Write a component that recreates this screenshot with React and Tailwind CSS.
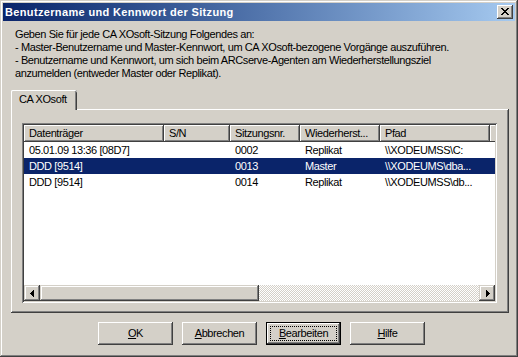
import React from 'react';

const columns = [
  { label: 'Datenträger', w: 'w-[140px]' },
  { label: 'S/N', w: 'w-[66px]' },
  { label: 'Sitzungsnr.', w: 'w-[70px]' },
  { label: 'Wiederherst...', w: 'w-[80px]' },
  { label: 'Pfad', w: 'w-[110px]' },
];

const rows = [
  { cells: ['05.01.09 13:36 [08D7]', '', '0002', 'Replikat', '\\\\XODEUMSS\\C:'] },
  { cells: ['DDD [9514]', '', '0013', 'Master', '\\\\XODEUMS\\dba...'], selected: true },
  { cells: ['DDD [9514]', '', '0014', 'Replikat', '\\\\XODEUMSS\\db...'] },
];

function CloseGlyph() {
  return (
    <svg width="8" height="7" viewBox="0 0 8 7" shapeRendering="crispEdges">
      <path
        fill="#000"
        d="M0 0h2v1H0zM6 0h2v1H6zM1 1h2v1H1zM5 1h2v1H5zM2 2h4v1H2zM3 3h2v1H3zM2 4h4v1H2zM1 5h2v1H1zM5 5h2v1H5zM0 6h2v1H0zM6 6h2v1H6z"
      />
    </svg>
  );
}

function Arrow({ dir }) {
  return (
    <svg width="4" height="7" viewBox="0 0 4 7" shapeRendering="crispEdges">
      {dir === 'left' ? (
        <path fill="#000" d="M3 0h1v7H3zM2 1h1v5H2zM1 2h1v3H1zM0 3h1v1H0z" />
      ) : (
        <path fill="#000" d="M0 0h1v7H0zM1 1h1v5H1zM2 2h1v3H2zM3 3h1v1H3z" />
      )}
    </svg>
  );
}

function PushButton({ children, isDefault }) {
  if (isDefault) {
    return (
      <div className="w-[75px] h-[23px] border border-black">
        <div className="h-full p-[3px] shadow-[inset_-1px_-1px_#404040,inset_1px_1px_#fff,inset_-2px_-2px_#808080]">
          <div className="h-full border border-dotted border-black flex items-center justify-center">
            {children}
          </div>
        </div>
      </div>
    );
  }
  return (
    <div className="w-[75px] h-[23px] flex items-center justify-center shadow-[inset_-1px_-1px_#404040,inset_1px_1px_#fff,inset_-2px_-2px_#808080]">
      {children}
    </div>
  );
}

export default function App() {
  return (
    <div className="w-[518px] h-[357px] p-[3px] bg-[#d4d0c8] text-black text-[11px] tracking-[-0.4px] font-['Liberation_Sans',Arial,sans-serif] shadow-[inset_-1px_-1px_#404040,inset_1px_1px_#d4d0c8,inset_-2px_-2px_#808080,inset_2px_2px_#fff] overflow-hidden">
      {/* title bar */}
      <div className="h-[18px] flex items-center pl-[2px] pr-[2px] bg-gradient-to-r from-[#0a246a] to-[#a6caf0]">
        <span className="text-white font-bold text-[11px] tracking-[0.35px] leading-none">Benutzername und Kennwort der Sitzung</span>
        <div className="ml-auto w-[16px] h-[14px] bg-[#d4d0c8] flex items-center justify-center pr-px pb-px shadow-[inset_-1px_-1px_#404040,inset_1px_1px_#fff,inset_-2px_-2px_#808080]">
          <CloseGlyph />
        </div>
      </div>

      {/* intro text */}
      <div className="mt-[7px] pl-[12px] leading-[13px]">
        <p>Geben Sie für jede CA XOsoft-Sitzung Folgendes an:</p>
        <p>- Master-Benutzername und Master-Kennwort, um CA XOsoft-bezogene Vorgänge auszuführen.</p>
        <p>- Benutzername und Kennwort, um sich beim ARCserve-Agenten am Wiederherstellungsziel</p>
        <p>anzumelden (entweder Master oder Replikat).</p>
      </div>

      {/* tab control */}
      <div className="mt-[10px] ml-[8px] w-[498px]">
        <div className="flex">
          <div className="relative z-10 -mb-px w-[66px] h-[20px] bg-[#d4d0c8] rounded-t-[2px] pl-[8px] pt-[3px] leading-[13px] shadow-[inset_1px_0_#fff,inset_0_1px_#fff,inset_-1px_0_#404040,inset_-2px_0_#808080]">
            CA XOsoft
          </div>
        </div>
        <div className="h-[204px] pt-[14px] pl-[11px] shadow-[inset_-1px_-1px_#404040,inset_1px_1px_#fff,inset_-2px_-2px_#808080]">
          {/* list view */}
          <div className="w-[475px] h-[180px] p-[2px] shadow-[inset_1px_1px_#808080,inset_-1px_-1px_#fff,inset_2px_2px_#404040,inset_-2px_-2px_#d4d0c8]">
            <div className="h-full bg-white flex flex-col">
              <div className="flex h-[17px] bg-[#d4d0c8]">
                {columns.map((c) => (
                  <div
                    key={c.label}
                    className={`${c.w} shrink-0 pl-[5px] leading-[16px] whitespace-nowrap overflow-hidden shadow-[inset_-1px_-1px_#404040,inset_1px_1px_#fff,inset_-2px_-2px_#808080]`}
                  >
                    {c.label}
                  </div>
                ))}
                <div className="flex-1 shadow-[inset_0_-1px_#404040,inset_1px_1px_#fff]" />
              </div>
              {rows.map((r, i) => (
                <div
                  key={i}
                  className={`flex h-[16px] leading-[16px] ${r.selected ? 'bg-[#0a246a] text-white' : ''}`}
                >
                  {r.cells.map((cell, j) => (
                    <div key={j} className={`${columns[j].w} shrink-0 pl-[5px] whitespace-nowrap overflow-hidden`}>
                      {cell}
                    </div>
                  ))}
                </div>
              ))}
              <div className="flex-1" />
              {/* horizontal scrollbar */}
              <div className="flex h-[16px]">
                <div className="w-[16px] h-[16px] bg-[#d4d0c8] flex items-center justify-center shadow-[inset_-1px_-1px_#404040,inset_1px_1px_#d4d0c8,inset_-2px_-2px_#808080,inset_2px_2px_#fff]">
                  <Arrow dir="left" />
                </div>
                <div className="w-[219px] h-[16px] bg-[#d4d0c8] shadow-[inset_-1px_-1px_#404040,inset_1px_1px_#d4d0c8,inset_-2px_-2px_#808080,inset_2px_2px_#fff]" />
                <div className="flex-1 bg-[repeating-conic-gradient(#d4d0c8_0%_25%,#fff_0%_50%)] bg-[length:2px_2px]" />
                <div className="w-[16px] h-[16px] bg-[#d4d0c8] flex items-center justify-center pl-px shadow-[inset_-1px_-1px_#404040,inset_1px_1px_#d4d0c8,inset_-2px_-2px_#808080,inset_2px_2px_#fff]">
                  <Arrow dir="right" />
                </div>
              </div>
            </div>
          </div>
        </div>
      </div>

      {/* buttons */}
      <div className="mt-[9px] pl-[95px] flex gap-[9px]">
        <PushButton>
          <span><span className="underline">O</span>K</span>
        </PushButton>
        <PushButton>
          <span><span className="underline">A</span>bbrechen</span>
        </PushButton>
        <PushButton isDefault>
          <span><span className="underline">B</span>earbeiten</span>
        </PushButton>
        <PushButton>
          <span><span className="underline">H</span>ilfe</span>
        </PushButton>
      </div>
    </div>
  );
}
